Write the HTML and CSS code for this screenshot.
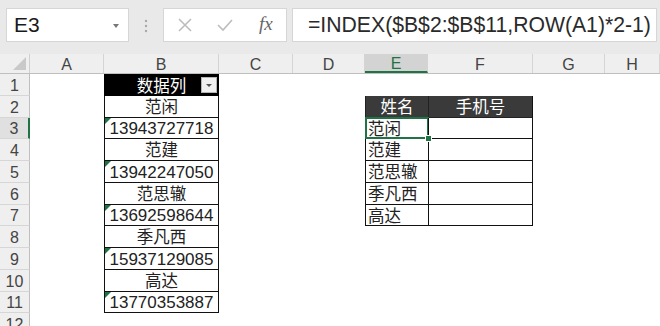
FILE: index.html
```html
<!DOCTYPE html>
<html>
<head>
    <meta charset="utf-8"/>
    <title>INDEX 隔行取值</title>
    <link rel="stylesheet" href="styles.css">
</head>
<body>
    <!-- 编辑栏 -->
    <div class="toolbar">
        <div class="name-box">E3<span class="name-arrow"></span></div>
        <div class="grip">
            <svg width="4" height="14" viewBox="0 0 4 14"><circle cx="2" cy="2" r="1.2"/><circle cx="2" cy="7" r="1.2"/><circle cx="2" cy="12" r="1.2"/></svg>
        </div>
        <div class="fn-box">
            <span class="fn-icon">
                <svg width="16" height="16" viewBox="0 0 16 16"><path d="M2 2 L14 14 M14 2 L2 14"/></svg>
            </span>
            <span class="fn-icon">
                <svg width="18" height="16" viewBox="0 0 18 16"><path d="M2 8 L7 13 L16 3"/></svg>
            </span>
            <span class="fn-icon fx">fx</span>
        </div>
        <div class="formula">=INDEX($B$2:$B$11,ROW(A1)*2-1)</div>
    </div>

    <!-- 工作表 -->
    <div class="sheet">
        <div class="row head-row">
            <div class="corner"></div>
            <div class="ch">A</div>
            <div class="ch">B</div>
            <div class="ch">C</div>
            <div class="ch">D</div>
            <div class="ch active">E</div>
            <div class="ch">F</div>
            <div class="ch">G</div>
            <div class="ch">H</div>
        </div>
        <div class="row">
            <div class="rh">1</div>
            <div class="col-b b-head">数据列<span class="filter"></span></div>
        </div>
        <div class="row">
            <div class="rh">2</div>
            <div class="col-b b-cell">范闲</div>
            <div class="col-e t-head">姓名</div>
            <div class="col-f t-head last">手机号</div>
        </div>
        <div class="row">
            <div class="rh active">3</div>
            <div class="col-b b-cell num">13943727718</div>
            <div class="col-e t-cell selected">范闲</div>
            <div class="col-f t-cell last"></div>
        </div>
        <div class="row">
            <div class="rh">4</div>
            <div class="col-b b-cell">范建</div>
            <div class="col-e t-cell">范建</div>
            <div class="col-f t-cell last"></div>
        </div>
        <div class="row">
            <div class="rh">5</div>
            <div class="col-b b-cell num">13942247050</div>
            <div class="col-e t-cell">范思辙</div>
            <div class="col-f t-cell last"></div>
        </div>
        <div class="row">
            <div class="rh">6</div>
            <div class="col-b b-cell">范思辙</div>
            <div class="col-e t-cell">季凡西</div>
            <div class="col-f t-cell last"></div>
        </div>
        <div class="row">
            <div class="rh">7</div>
            <div class="col-b b-cell num">13692598644</div>
            <div class="col-e t-cell">高达</div>
            <div class="col-f t-cell last"></div>
        </div>
        <div class="row">
            <div class="rh">8</div>
            <div class="col-b b-cell">季凡西</div>
        </div>
        <div class="row">
            <div class="rh">9</div>
            <div class="col-b b-cell num">15937129085</div>
        </div>
        <div class="row">
            <div class="rh">10</div>
            <div class="col-b b-cell">高达</div>
        </div>
        <div class="row">
            <div class="rh">11</div>
            <div class="col-b b-cell num">13770353887</div>
        </div>
        <div class="row">
            <div class="rh">12</div>
        </div>
    </div>
</body>
</html>
```

FILE: styles.css
```css
body {
    margin: 0;
    overflow: hidden;
    background: #fff;
    font-family: "Liberation Sans", "Noto Sans CJK SC", sans-serif;
    color: #222;
}

/* 编辑栏 */
.toolbar {
    display: flex;
    align-items: flex-start;
    height: 54px;
    padding: 8px 0 0 6px;
    box-sizing: border-box;
    background: #e9e9e9;
}
.name-box {
    position: relative;
    width: 123px;
    height: 34px;
    box-sizing: border-box;
    padding-left: 7px;
    display: flex;
    align-items: center;
    background: #fff;
    border: 1px solid #d6d6d6;
    font-size: 21px;
    color: #1a1a1a;
}
.name-arrow {
    position: absolute;
    right: 9px;
    top: 15px;
    border-left: 3px solid transparent;
    border-right: 3px solid transparent;
    border-top: 4px solid #777;
}
.grip {
    width: 34px;
    display: flex;
    justify-content: center;
    padding-top: 11px;
}
.grip svg {
    fill: #a8a8a8;
}
.fn-box {
    display: flex;
    width: 124px;
    height: 34px;
    box-sizing: border-box;
    padding-left: 1px;
    background: #fff;
    border: 1px solid #d6d6d6;
    margin-right: 5px;
}
.fn-icon {
    width: 41px;
    display: flex;
    align-items: center;
    justify-content: center;
}
.fn-icon svg {
    fill: none;
    stroke: #bdbdbd;
    stroke-width: 1.6;
}
.fx {
    font-family: "Liberation Serif", serif;
    font-style: italic;
    font-size: 19px;
    color: #666;
    padding-bottom: 3px;
}
.formula {
    flex: 1;
    height: 34px;
    box-sizing: border-box;
    margin-right: 3px;
    padding-left: 15px;
    display: flex;
    align-items: center;
    background: #fff;
    border: 1px solid #d6d6d6;
    font-size: 21.2px;
    color: #2a2a2a;
    white-space: nowrap;
    overflow: hidden;
}

/* 工作表 */
.row {
    display: grid;
    grid-template-columns: 30px 74px 115px 74px 72px 63px 105px 72px 1fr;
    grid-template-rows: 100%;
    height: 21.75px;
    font-size: 16.5px;
    line-height: 1;
}
.head-row {
    height: 20px;
    background: #efefef;
    border-bottom: 1px solid #bfbfbf;
    box-sizing: border-box;
}
.corner {
    position: relative;
    border-right: 1px solid #cfcfcf;
}
.corner::after {
    content: "";
    position: absolute;
    right: 3px;
    bottom: 3px;
    border-left: 13px solid transparent;
    border-bottom: 13px solid #c9c9c9;
}
.ch {
    display: flex;
    align-items: center;
    justify-content: center;
    padding-top: 2px;
    border-right: 1px solid #d4d4d4;
    color: #444;
    font-size: 16px;
}
.ch.active {
    background: #d3d3d3;
    border-bottom: 2px solid #217346;
    color: #217346;
}
.rh {
    grid-column: 1;
    display: flex;
    align-items: center;
    justify-content: center;
    background: #efefef;
    border-right: 1px solid #bfbfbf;
    border-bottom: 1px solid #d6d6d6;
    box-sizing: border-box;
    color: #444;
    font-size: 16px;
    padding-top: 3px;
    overflow: hidden;
}
.rh.active {
    background: #e0e0e0;
    border-right: 2px solid #217346;
}

.col-b { grid-column: 3; }
.col-e { grid-column: 6; }
.col-f { grid-column: 7; }

.b-head {
    position: relative;
    display: flex;
    align-items: center;
    justify-content: center;
    padding-top: 2px;
    background: #000;
    color: #fff;
}
.filter {
    position: absolute;
    right: 2px;
    top: 3px;
    width: 16px;
    height: 16px;
    box-sizing: border-box;
    background: #f1f1f1;
    border: 1px solid #b5b5b5;
}
.filter::after {
    content: "";
    position: absolute;
    left: 4px;
    top: 6px;
    border-left: 3px solid transparent;
    border-right: 3px solid transparent;
    border-top: 3px solid #555;
}
.b-cell {
    position: relative;
    display: flex;
    align-items: center;
    justify-content: center;
    padding-top: 2px;
    border-left: 1px solid #111;
    border-right: 1px solid #111;
    border-bottom: 1px solid #111;
    box-sizing: border-box;
}
.num {
    font-size: 17px;
}
.num::before {
    content: "";
    position: absolute;
    left: 0;
    top: 0;
    border-top: 6px solid #1f7244;
    border-right: 6px solid transparent;
}

.t-head,
.t-cell {
    position: relative;
    display: flex;
    align-items: center;
    padding-top: 2px;
    border-left: 1px solid #111;
    border-bottom: 1px solid #111;
    box-sizing: border-box;
}
.t-head {
    justify-content: center;
    background: #3a3a3a;
    color: #fff;
    border-color: #222;
}
.t-cell {
    padding-left: 2px;
}
.last {
    border-right: 1px solid #111;
}
.selected::after {
    content: "";
    position: absolute;
    left: -1px;
    top: -1px;
    right: -1px;
    bottom: -1px;
    border: 2px solid #217346;
}
.selected::before {
    content: "";
    position: absolute;
    right: -4px;
    bottom: -4px;
    width: 5px;
    height: 5px;
    background: #217346;
    border: 1px solid #fff;
    z-index: 1;
}
```
